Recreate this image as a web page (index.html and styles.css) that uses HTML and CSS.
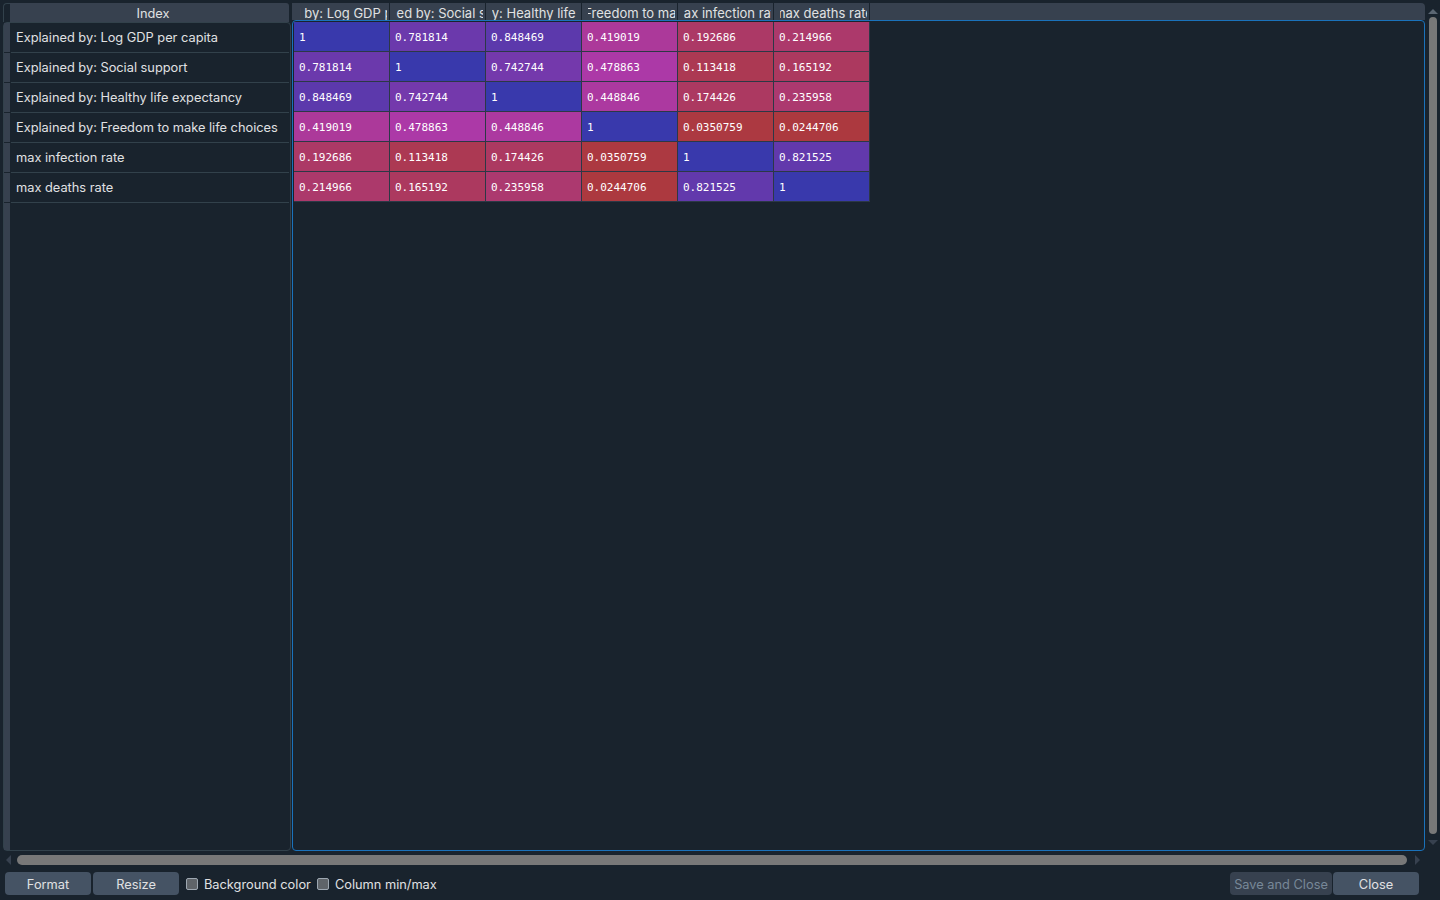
FILE: index.html
```html
<!DOCTYPE html>
<html>
<head>
<meta charset="utf-8">
<link rel="stylesheet" href="styles.css">
</head>
<body>
<div class="app">
  <div class="main">
    <div class="left">
      <div class="lhead">
        <div class="corner"></div>
        <div class="hcell idx">Index</div>
      </div>
      <div class="lbody">
        <div class="vstrip">
          <div class="seg"></div><div class="seg"></div><div class="seg"></div>
          <div class="seg"></div><div class="seg"></div><div class="seg"></div>
          <div class="seg fill"></div>
        </div>
        <div class="lrows">
          <div class="lrow">Explained by: Log GDP per capita</div>
          <div class="lrow">Explained by: Social support</div>
          <div class="lrow">Explained by: Healthy life expectancy</div>
          <div class="lrow">Explained by: Freedom to make life choices</div>
          <div class="lrow">max infection rate</div>
          <div class="lrow">max deaths rate</div>
        </div>
      </div>
    </div>
    <div class="right">
      <div class="dhead">
        <div class="dh first"><div class="dt"><span>Explained by: Log GDP per capita</span></div></div>
        <div class="dh"><div class="dt"><span>Explained by: Social support</span></div></div>
        <div class="dh"><div class="dt"><span>Explained by: Healthy life expectancy</span></div></div>
        <div class="dh"><div class="dt"><span>Explained by: Freedom to make life choices</span></div></div>
        <div class="dh"><div class="dt"><span>max infection rate</span></div></div>
        <div class="dh"><div class="dt"><span>max deaths rate</span></div></div>
        <div class="dh rest"></div>
      </div>
      <div class="dbody">
        <div class="grid">
          <div class="cell" style="background:hsl(240,50%,45%)">1</div>
          <div class="cell" style="background:hsl(266.2,50%,45%)">0.781814</div>
          <div class="cell" style="background:hsl(258.2,50%,45%)">0.848469</div>
          <div class="cell" style="background:hsl(309.7,50%,45%)">0.419019</div>
          <div class="cell" style="background:hsl(336.9,50%,45%)">0.192686</div>
          <div class="cell" style="background:hsl(334.2,50%,45%)">0.214966</div>

          <div class="cell" style="background:hsl(266.2,50%,45%)">0.781814</div>
          <div class="cell" style="background:hsl(240,50%,45%)">1</div>
          <div class="cell" style="background:hsl(270.9,50%,45%)">0.742744</div>
          <div class="cell" style="background:hsl(302.5,50%,45%)">0.478863</div>
          <div class="cell" style="background:hsl(346.4,50%,45%)">0.113418</div>
          <div class="cell" style="background:hsl(340.2,50%,45%)">0.165192</div>

          <div class="cell" style="background:hsl(258.2,50%,45%)">0.848469</div>
          <div class="cell" style="background:hsl(270.9,50%,45%)">0.742744</div>
          <div class="cell" style="background:hsl(240,50%,45%)">1</div>
          <div class="cell" style="background:hsl(306.1,50%,45%)">0.448846</div>
          <div class="cell" style="background:hsl(339.1,50%,45%)">0.174426</div>
          <div class="cell" style="background:hsl(331.7,50%,45%)">0.235958</div>

          <div class="cell" style="background:hsl(309.7,50%,45%)">0.419019</div>
          <div class="cell" style="background:hsl(302.5,50%,45%)">0.478863</div>
          <div class="cell" style="background:hsl(306.1,50%,45%)">0.448846</div>
          <div class="cell" style="background:hsl(240,50%,45%)">1</div>
          <div class="cell" style="background:hsl(355.8,50%,45%)">0.0350759</div>
          <div class="cell" style="background:hsl(357.1,50%,45%)">0.0244706</div>

          <div class="cell" style="background:hsl(336.9,50%,45%)">0.192686</div>
          <div class="cell" style="background:hsl(346.4,50%,45%)">0.113418</div>
          <div class="cell" style="background:hsl(339.1,50%,45%)">0.174426</div>
          <div class="cell" style="background:hsl(355.8,50%,45%)">0.0350759</div>
          <div class="cell" style="background:hsl(240,50%,45%)">1</div>
          <div class="cell" style="background:hsl(261.4,50%,45%)">0.821525</div>

          <div class="cell" style="background:hsl(334.2,50%,45%)">0.214966</div>
          <div class="cell" style="background:hsl(340.2,50%,45%)">0.165192</div>
          <div class="cell" style="background:hsl(331.7,50%,45%)">0.235958</div>
          <div class="cell" style="background:hsl(357.1,50%,45%)">0.0244706</div>
          <div class="cell" style="background:hsl(261.4,50%,45%)">0.821525</div>
          <div class="cell" style="background:hsl(240,50%,45%)">1</div>
        </div>
      </div>
    </div>
    <div class="vscroll">
      <div class="arrow up"></div>
      <div class="vhandle"></div>
      <div class="arrow down"></div>
    </div>
  </div>
  <div class="hscroll">
    <div class="arrow left"></div>
    <div class="hhandle"></div>
    <div class="arrow right"></div>
  </div>
  <div class="footer">
    <div class="btn">Format</div>
    <div class="btn">Resize</div>
    <label class="check"><span class="box"></span>Background color</label>
    <label class="check"><span class="box"></span>Column min/max</label>
    <div class="spacer"></div>
    <div class="btn disabled wide">Save and Close</div>
    <div class="btn">Close</div>
  </div>
</div>
</body>
</html>
```

FILE: styles.css
```css
html, body {
  margin: 0;
  padding: 0;
  background: #19232d;
  overflow: hidden;
}
.app {
  width: 1440px;
  height: 900px;
  display: flex;
  flex-direction: column;
  font-family: Inter, "Liberation Sans", sans-serif;
  font-size: 12.8px;
  color: #e0e1e3;
}
.main {
  display: flex;
  padding: 3px 0 0 3px;
  height: 848px;
}
/* left index table */
.left {
  width: 288px;
  display: flex;
  flex-direction: column;
}
.lhead {
  display: flex;
  height: 19px;
}
.corner {
  width: 6px;
  border-left: 1px solid #32414b;
  border-top: 1px solid #32414b;
  border-top-left-radius: 4px;
}
.hcell {
  background: #37414f;
  display: flex;
  align-items: center;
  justify-content: center;
  padding-top: 2px;
  box-sizing: border-box;
}
.idx {
  width: 279px;
  padding-left: 7px;
  border-top-right-radius: 3px;
}
.lbody {
  flex: 1;
  display: flex;
  border: 1px solid #32414b;
  border-radius: 4px;
}
.vstrip {
  width: 6px;
  display: flex;
  flex-direction: column;
}
.seg {
  height: 29px;
  background: #37414f;
  margin-bottom: 1px;
}
.seg.fill {
  flex: 1;
  margin-bottom: 0;
}
.lrows {
  flex: 1;
  margin-left: 1px;
  margin-right: 1px;
}
.lrow {
  height: 29px;
  border-bottom: 1px solid #32414b;
  padding-left: 5px;
  display: flex;
  align-items: center;
  white-space: nowrap;
  overflow: hidden;
}
/* data table */
.right {
  width: 1133px;
  margin-left: 1px;
  display: flex;
  flex-direction: column;
}
.dhead {
  display: flex;
  height: 17px;
}
.dh {
  flex: none;
  width: 87px;
  height: 14px;
  padding: 3px 2px 0 6px;
  border-right: 1px solid #19232d;
  background: #37414f;
  display: flex;
  font-size: 13px;
}
.dh.first {
  width: 87px;
  padding-left: 8px;
}
.dt {
  flex: 1;
  overflow: hidden;
  display: flex;
  justify-content: center;
  align-items: center;
  white-space: nowrap;
}
.dt span {
  flex: none;
}
.dh.rest {
  flex: 1;
  width: auto;
  border-right: none;
  border-top-right-radius: 4px;
}
.dbody {
  flex: 1;
  border: 1px solid #1a72bb;
  border-radius: 4px;
  padding: 1px;
}
.grid {
  display: grid;
  grid-template-columns: repeat(6, 96px);
  grid-auto-rows: 30px;
}
.cell {
  border-right: 1px solid #2c3846;
  border-bottom: 1px solid #2c3846;
  padding-left: 5px;
  padding-top: 2px;
  display: flex;
  align-items: center;
  font-family: "DejaVu Sans Mono", "Liberation Mono", monospace;
  font-size: 11px;
  color: #ffffff;
}
/* scrollbars */
.vscroll {
  width: 12px;
  margin-left: 2px;
  display: flex;
  flex-direction: column;
  align-items: center;
}
.arrow {
  width: 0;
  height: 0;
}
.arrow.up {
  margin-top: 6px;
  border-left: 5px solid transparent;
  border-right: 5px solid transparent;
  border-bottom: 5px solid #5b6672;
}
.vhandle {
  margin-top: 3px;
  width: 8px;
  height: 817px;
  background: #787878;
  border-radius: 4px;
}
.arrow.down {
  margin-top: 6px;
  border-left: 5px solid transparent;
  border-right: 5px solid transparent;
  border-top: 5px solid #37414f;
}
.hscroll {
  height: 17px;
  display: flex;
  align-items: center;
  padding-left: 6px;
}
.arrow.left {
  border-top: 5px solid transparent;
  border-bottom: 5px solid transparent;
  border-right: 5px solid #37414f;
}
.hhandle {
  margin-left: 6px;
  width: 1390px;
  height: 10px;
  background: #787878;
  border-radius: 5px;
}
.arrow.right {
  margin-left: 8px;
  border-top: 5px solid transparent;
  border-bottom: 5px solid transparent;
  border-left: 5px solid #37414f;
}
/* footer */
.footer {
  display: flex;
  align-items: center;
  padding: 4px 21px 4px 5px;
  height: 23px;
  gap: 2px;
}
.btn {
  width: 86px;
  height: 22px;
  padding-top: 1px;
  background: #455364;
  border-radius: 4px;
  display: flex;
  align-items: center;
  justify-content: center;
  color: #e0e1e3;
}
.btn.wide {
  width: 102px;
  margin-right: -1px;
}
.btn.disabled {
  background: #37414f;
  color: #788898;
}
.check {
  display: flex;
  align-items: center;
  margin-left: 5px;
  gap: 6px;
  padding-top: 1px;
}
.check + .check {
  margin-left: 4px;
}
.box {
  width: 10px;
  height: 10px;
  margin-top: -1px;
  border: 1px solid #9da7b1;
  border-radius: 2px;
  background: #5f6469;
  box-shadow: 0 0 0 1px #19232d;
}
.spacer {
  flex: 1;
}
```
